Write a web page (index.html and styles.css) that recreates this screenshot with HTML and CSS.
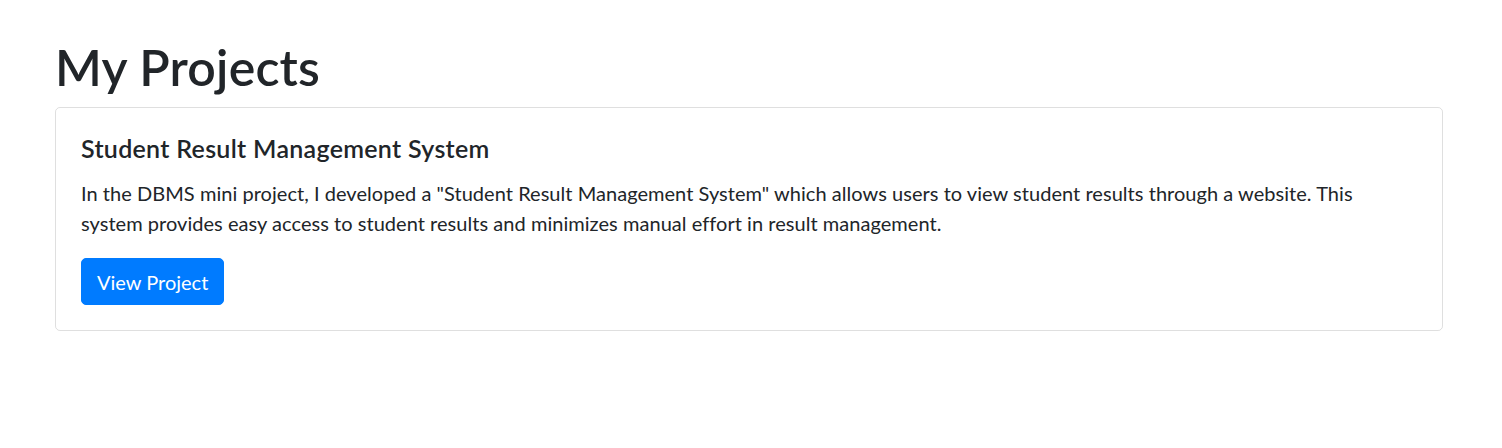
FILE: index.html
```html
<!DOCTYPE html>
<html lang="en">
<head>
<meta charset="utf-8">
<title>My Projects</title>
<link rel="stylesheet" href="styles.css">
</head>
<body>
<main class="container">
  <h1 class="page-title">My Projects</h1>
  <div class="card">
    <h5 class="card-title">Student Result Management System</h5>
    <p class="card-text">In the DBMS mini project, I developed a "Student Result Management System" which allows users to view student results through a website. This system provides easy access to student results and minimizes manual effort in result management.</p>
    <a class="btn" href="#">View Project</a>
  </div>
</main>
</body>
</html>
```
FILE: styles.css
```css
html, body {
  margin: 0;
  padding: 0;
  background: #fff;
}
body {
  font-family: "Lato", "Open Sans", sans-serif;
  color: #212529;
  font-size: 20px;
  line-height: 1.5;
}
.container {
  padding: 37px 0 0 55px;
  width: 1388px;
}
.page-title {
  margin: 0 0 10px 0;
  font-size: 50px;
  line-height: 60px;
  font-weight: 600;
  letter-spacing: 0.2px;
}
.card {
  border: 1px solid rgba(0, 0, 0, 0.125);
  border-radius: 5px;
  padding: 25px;
}
.card-title {
  margin: 0 0 15px 0;
  font-size: 25px;
  line-height: 30px;
  font-weight: 600;
  letter-spacing: 0.3px;
}
.card-text {
  margin: 0 0 20px 0;
  padding-right: 20px;
  letter-spacing: 0.04px;
}
.btn {
  display: inline-block;
  background: #007bff;
  color: #fff;
  border: 1px solid #007bff;
  border-radius: 5px;
  padding: 7.5px 15px;
  text-decoration: none;
  font-size: 20px;
  line-height: 30px;
}
```
